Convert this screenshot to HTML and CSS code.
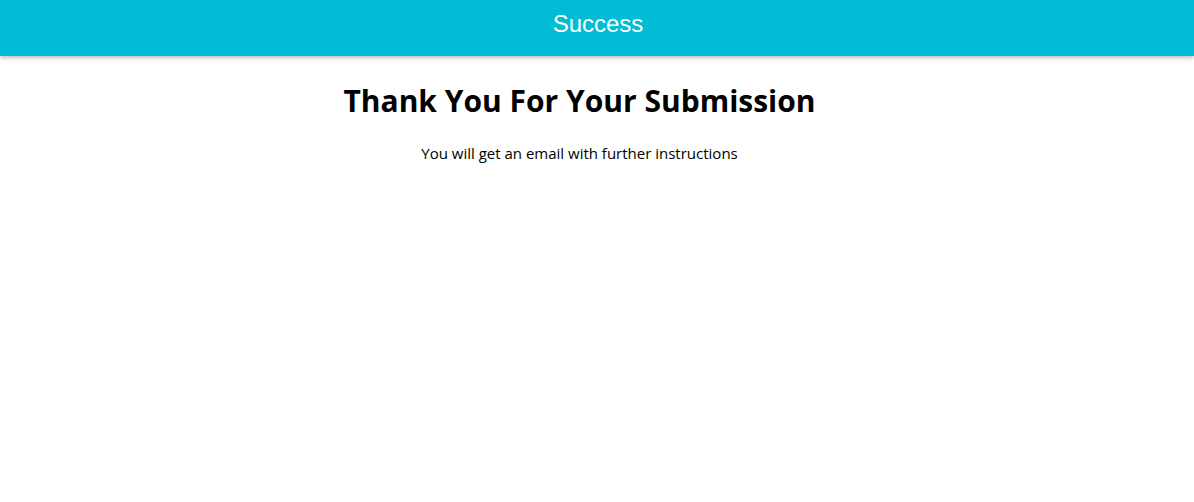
FILE: index.html
```html
<!DOCTYPE html>
<html>
<head>
<meta charset="utf-8">
<link rel="stylesheet" href="styles.css">
</head>
<body>
<header class="topbar"><span class="topbar-title">Success</span></header>
<main class="content">
  <h1 class="title">Thank You For Your Submission</h1>
  <p class="subtitle">You will get an email with further instructions</p>
</main>
</body>
</html>
```
FILE: styles.css
```css
html, body { margin: 0; padding: 0; background: #fff; }
body { font-family: "Open Sans", "Noto Sans", sans-serif; color: #000; }
.topbar {
  height: 56px;
  background: #00bcd4;
  display: flex;
  align-items: center;
  justify-content: center;
  box-shadow: 0 2px 4px rgba(0,0,0,0.25);
}
.topbar-title {
  font-family: "Liberation Sans", Arial, sans-serif;
  font-size: 24px;
  line-height: 28px;
  color: #fff;
  margin-bottom: 8px;
  padding-left: 2px;
}
.content {
  display: flex;
  flex-direction: column;
  align-items: center;
  padding-right: 35px;
  padding-top: 25px;
}
.title {
  margin: 0;
  font-size: 30px;
  font-weight: 700;
  line-height: 40px;
}
.subtitle {
  margin: 22px 0 0;
  font-size: 15px;
  line-height: 20px;
}
```
